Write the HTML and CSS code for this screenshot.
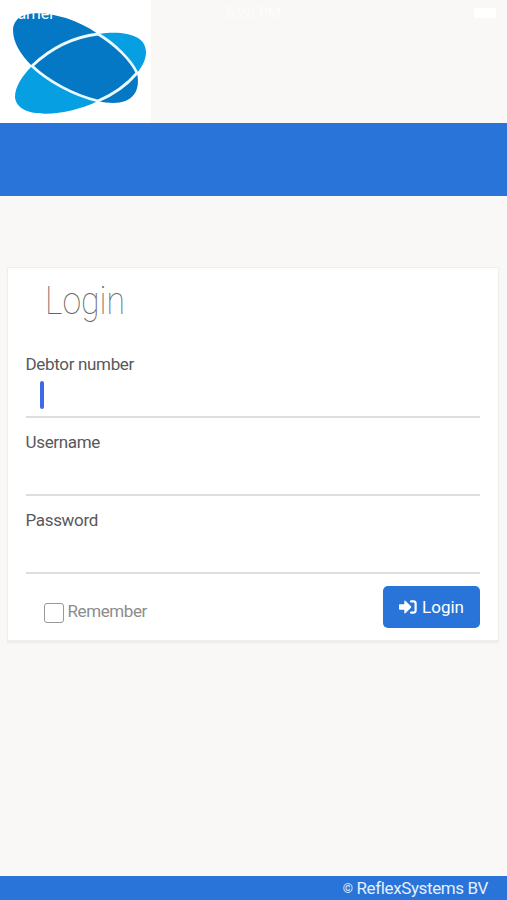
FILE: index.html
```
<!DOCTYPE html>
<html lang="en">
<head>
    <meta charset="UTF-8">
    <meta name="viewport" content="width=device-width, initial-scale=1.0">
    <title>Login</title>
    <link rel="stylesheet" href="styles.css">
</head>
<body>
    <div class="status-bar">
        <span class="carrier">Carrier</span>
        <span class="time">5:28 PM</span>
        <span class="battery"></span>
    </div>
    <header class="header">
        <svg class="logo" width="151" height="123" viewBox="0 0 151 123">
            <path class="orbit-light" d="M98 34C126 30 146 36 146 52C146 60 142 67 137 73C126 86 112 95 98 101C68 116 17 121 15 97C15 87 22 76 32 66C50 49 73 37 98 34Z"/>
            <path class="orbit-dark" d="M13 30C14 9 43 11 66 18C78 22 88 27 98 34C118 44 133 60 137 73C142 96 127 108 98 101C73 95 48 81 32 66C20 54 13 42 13 30Z"/>
            <path class="orbit-line" d="M32 66C50 49 73 37 98 34C115 44 131 60 137 73C126 86 112 95 98 101C73 95 48 81 32 66Z"/>
        </svg>
    </header>
    <div class="banner"></div>
    <main class="content">
        <form class="login-card">
            <h1 class="login-title"><span class="title-text">Login</span></h1>
            <div class="field">
                <label class="field-label" for="debtor">Debtor number</label>
                <div class="field-line">
                    <span class="caret"></span>
                    <input class="field-input" id="debtor" type="text">
                </div>
            </div>
            <div class="field">
                <label class="field-label" for="username">Username</label>
                <div class="field-line"><input class="field-input" id="username" type="text"></div>
            </div>
            <div class="field">
                <label class="field-label" for="password">Password</label>
                <div class="field-line"><input class="field-input" id="password" type="password"></div>
            </div>
            <div class="actions">
                <label class="remember">
                    <input class="checkbox" type="checkbox">
                    <span class="remember-text">Remember</span>
                </label>
                <button class="login-button" type="button">
                    <svg width="18" height="16" viewBox="0 0 18 16">
                        <path class="icon-arrow" d="M.8 5.3H5.3V2.2Q5.5 1.2 6.4 1.8L12 7.3Q12.6 8 12 8.7L6.4 14.2Q5.5 14.8 5.3 13.8V10.7H.8Q0 10.7 0 9.9V6.1Q0 5.3.8 5.3Z"/>
                        <path class="icon-door" d="M12 2.4H14.6Q16.6 2.4 16.6 4.4V11.6Q16.6 13.6 14.6 13.6H12"/>
                    </svg>
                    <span>Login</span>
                </button>
            </div>
        </form>
    </main>
    <footer class="footer"><span class="copy">©</span> ReflexSystems BV</footer>
</body>
</html>
```
FILE: styles.css
```
* {
    box-sizing: border-box;
}
body {
    margin: 0;
    height: 100vh;
    display: flex;
    flex-direction: column;
    overflow: hidden;
    background: #f9f8f6;
    font-family: Roboto, "Liberation Sans", sans-serif;
    color: #58585a;
}
/* sits on top of the header */
.status-bar {
    position: absolute;
    top: 0;
    left: 0;
    width: 100%;
    height: 26px;
    padding: 0 11px 0 7px;
    display: flex;
    align-items: center;
    justify-content: space-between;
    color: #fff;
    font-size: 16px;
}
.time {
    font-size: 15px;
    opacity: 0.7;
}
.battery {
    width: 22px;
    height: 10px;
    margin-left: 22px;
    border-radius: 2px;
    background: #fff;
}
.header {
    flex: none;
    height: 123px;
}
.logo {
    display: block;
    background: #fff;
}
.orbit-light {
    fill: #059fe2;
}
.orbit-dark {
    fill: #0478c4;
}
.orbit-line {
    fill: none;
    stroke: #eafaff;
    stroke-width: 2.8;
}
.banner {
    flex: none;
    height: 73px;
    background: #2874d9;
}
.content {
    flex: 1;
    padding: 71px 8px 0 7px;
}
.login-card {
    height: 375px;
    padding: 9px 18px 0 17.5px;
    background: #fff;
    border: 1px solid #efeeed;
    border-bottom-width: 2px;
    box-shadow: 0 1px 1px #eeedec;
}
.login-title {
    margin: 0 0 27px 19px;
    height: 48px;
    line-height: 48px;
    font-size: 38px;
    font-weight: 100;
    color: #666;
}
.title-text {
    display: inline-block;
    transform: scaleX(0.89);
    transform-origin: left;
}
.field {
    height: 78px;
}
.field-label {
    display: block;
    height: 24px;
    line-height: 24px;
    font-size: 17px;
    letter-spacing: -0.33px;
}
.field-line {
    display: flex;
    align-items: center;
    height: 42px;
    padding: 0 0 2px 14px;
    border-bottom: 2px solid #dedede;
}
.field-input {
    flex: 1;
    min-width: 0;
    border: 0;
    padding: 0;
    outline: none;
    background: transparent;
    font: inherit;
}
.caret {
    width: 4px;
    height: 28px;
    border-radius: 2px;
    background: #4169e5;
}
.actions {
    display: flex;
    justify-content: space-between;
    align-items: flex-start;
}
.remember {
    display: flex;
    align-items: flex-start;
    gap: 4px;
    margin: 13px 0 0 18px;
    font-size: 17px;
    line-height: 24px;
    letter-spacing: -0.4px;
    color: #8c8c8c;
}
.checkbox {
    appearance: none;
    width: 20px;
    height: 20px;
    margin: 4px 0 0;
    border: 1px solid #999;
    border-radius: 3px;
    background: #fff;
}
.login-button {
    display: flex;
    align-items: center;
    justify-content: center;
    gap: 5px;
    width: 97px;
    height: 42px;
    padding: 0;
    border: 0;
    border-radius: 5px;
    background: #2874d9;
    color: #fff;
    font: 17px Roboto, "Liberation Sans", sans-serif;
}
.icon-arrow {
    fill: #fff;
}
.icon-door {
    fill: none;
    stroke: #fff;
    stroke-width: 2.2;
    stroke-linecap: round;
}
.footer {
    flex: none;
    height: 24px;
    padding-right: 19px;
    line-height: 25px;
    text-align: right;
    font-size: 17px;
    letter-spacing: -0.38px;
    color: #e4efff;
    background: #2874d9;
}
.copy {
    font-size: 13px;
    vertical-align: 1px;
}
```
